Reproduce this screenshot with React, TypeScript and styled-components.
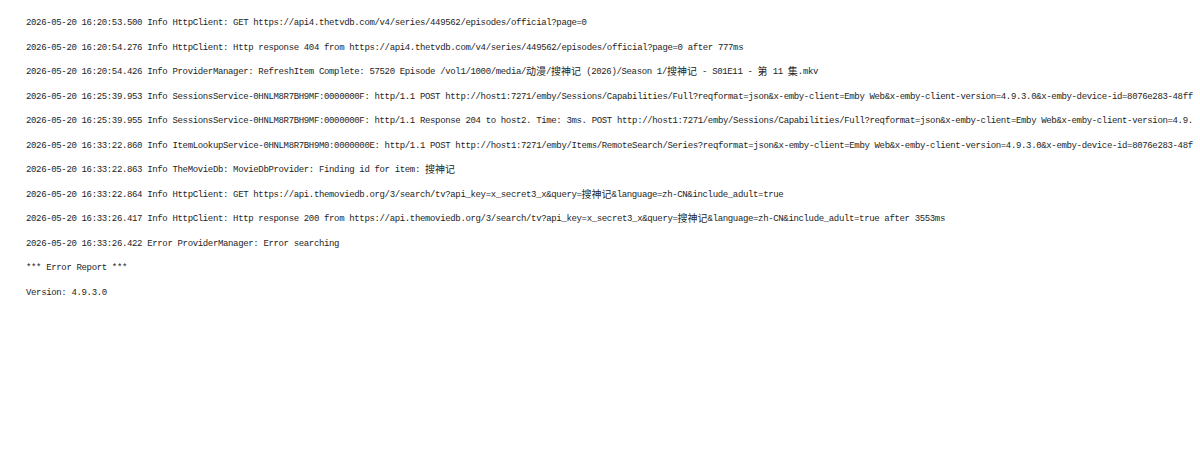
import React from "react";
import styled, { createGlobalStyle } from "styled-components";

const Global = createGlobalStyle`
  html, body {
    margin: 0;
    padding: 0;
    background: #ffffff;
    overflow: hidden;
  }
  body {
    width: 1200px;
    height: 464px;
  }
`;

const LogView = styled.div`
  display: flex;
  flex-direction: column;
  padding: 11px 0 0 26px;
  width: 1200px;
  box-sizing: border-box;
  overflow: hidden;
`;

const LogLine = styled.p`
  margin: 0;
  height: 24.5px;
  line-height: 24.5px;
  white-space: pre;
  font-family: "Liberation Mono", "DejaVu Sans Mono", monospace;
  font-size: 9px;
  letter-spacing: -0.35px;
  color: #1e1e1e;
`;

const Cjk = styled.span`
  font-family: "Noto Sans CJK SC", sans-serif;
  font-size: 10px;
  letter-spacing: 0;
  display: inline-block;
  width: 10px;
  text-align: center;
  vertical-align: -1px;
  line-height: 10px;
`;

const lines: string[] = [
  "2026-05-20 16:20:53.500 Info HttpClient: GET https://api4.thetvdb.com/v4/series/449562/episodes/official?page=0",
  "2026-05-20 16:20:54.276 Info HttpClient: Http response 404 from https://api4.thetvdb.com/v4/series/449562/episodes/official?page=0 after 777ms",
  "2026-05-20 16:20:54.426 Info ProviderManager: RefreshItem Complete: 57520 Episode /vol1/1000/media/动漫/搜神记 (2026)/Season 1/搜神记 - S01E11 - 第 11 集.mkv",
  "2026-05-20 16:25:39.953 Info SessionsService-0HNLM8R7BH9MF:0000000F: http/1.1 POST http://host1:7271/emby/Sessions/Capabilities/Full?reqformat=json&x-emby-client=Emby Web&x-emby-client-version=4.9.3.0&x-emby-device-id=8076e283-48ff",
  "2026-05-20 16:25:39.955 Info SessionsService-0HNLM8R7BH9MF:0000000F: http/1.1 Response 204 to host2. Time: 3ms. POST http://host1:7271/emby/Sessions/Capabilities/Full?reqformat=json&x-emby-client=Emby Web&x-emby-client-version=4.9.",
  "2026-05-20 16:33:22.860 Info ItemLookupService-0HNLM8R7BH9M0:0000000E: http/1.1 POST http://host1:7271/emby/Items/RemoteSearch/Series?reqformat=json&x-emby-client=Emby Web&x-emby-client-version=4.9.3.0&x-emby-device-id=8076e283-48f",
  "2026-05-20 16:33:22.863 Info TheMovieDb: MovieDbProvider: Finding id for item: 搜神记",
  "2026-05-20 16:33:22.864 Info HttpClient: GET https://api.themoviedb.org/3/search/tv?api_key=x_secret3_x&query=搜神记&language=zh-CN&include_adult=true",
  "2026-05-20 16:33:26.417 Info HttpClient: Http response 200 from https://api.themoviedb.org/3/search/tv?api_key=x_secret3_x&query=搜神记&language=zh-CN&include_adult=true after 3553ms",
  "2026-05-20 16:33:26.422 Error ProviderManager: Error searching",
  "*** Error Report ***",
  "Version: 4.9.3.0",
];

function renderRuns(text: string) {
  const parts = text.split(/([\u3400-\u9fff])/);
  return parts.map((p, i) =>
    /^[\u3400-\u9fff]$/.test(p) ? <Cjk key={i}>{p}</Cjk> : <React.Fragment key={i}>{p}</React.Fragment>
  );
}

export default function App() {
  return (
    <>
      <Global />
      <LogView>
        {lines.map((l, i) => (
          <LogLine key={i}>{renderRuns(l)}</LogLine>
        ))}
      </LogView>
    </>
  );
}
